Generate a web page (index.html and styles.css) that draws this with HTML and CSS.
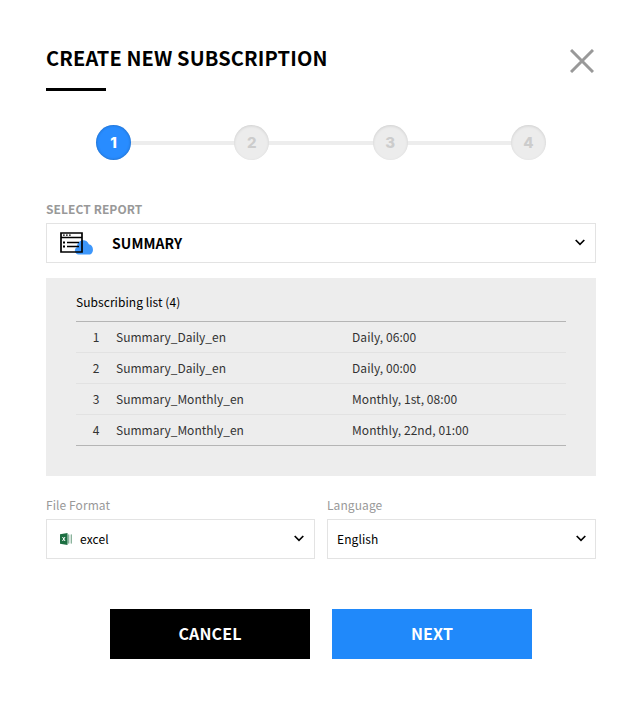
FILE: index.html
```html
<!DOCTYPE html>
<html lang="en">
<head>
<meta charset="utf-8">
<title>Create new subscription</title>
<link rel="stylesheet" href="styles.css">
</head>
<body>
<main class="dialog">
  <header class="header">
    <h1 class="title">CREATE NEW SUBSCRIPTION</h1>
    <button class="close" aria-label="Close"><svg width="24" height="24" viewBox="0 0 24 24"><path d="M1 1L23 23M23 1L1 23" fill="none" stroke="#999" stroke-width="3"/></svg></button>
  </header>
  <ol class="steps">
    <li class="step active">1</li>
    <li class="step">2</li>
    <li class="step">3</li>
    <li class="step">4</li>
  </ol>
  <label class="label strong">SELECT REPORT</label>
  <div class="select">
    <svg class="report-icon" width="34" height="24" viewBox="0 0 34 24"><path d="M18.500 23.500a4 4 0 0 1-1.500-7.500c0-8 10-9 12-2.500 5 0 5.500 10 0 10z" fill="#3d97fb"/><path d="M1 2h21v19H1zM1 6.500h21M7 11.500h12M7 15.500h12" fill="none" stroke="#000" stroke-width="1.700"/><path d="M3 4.200h8" stroke="#000" stroke-width="1.300" stroke-dasharray="1.700 1.300"/><path d="M3 11.500h2M3 15.500h2" stroke="#000" stroke-width="2"/></svg>
    <span class="value report">SUMMARY</span>
    <svg class="chevron" width="10" height="7" viewBox="0 0 10 7"><path d="M.7 1L5 5.300L9.300 1" fill="none" stroke="#000" stroke-width="1.700"/></svg>
  </div>
  <section class="panel">
    <h2 class="panel-title">Subscribing list (4)</h2>
    <div class="list">
      <div class="row"><span class="num">1</span><span>Summary_Daily_en</span><span class="schedule">Daily, 06:00</span></div>
      <div class="row"><span class="num">2</span><span>Summary_Daily_en</span><span class="schedule">Daily, 00:00</span></div>
      <div class="row"><span class="num">3</span><span>Summary_Monthly_en</span><span class="schedule">Monthly, 1st, 08:00</span></div>
      <div class="row"><span class="num">4</span><span>Summary_Monthly_en</span><span class="schedule">Monthly, 22nd, 01:00</span></div>
    </div>
  </section>
  <div class="fields">
    <div class="field">
      <label class="label">File Format</label>
      <div class="select">
        <svg class="excel-icon" width="13" height="12" viewBox="0 0 13 12"><path d="M7 1.500h5v9H7" fill="#d5e5dc"/><path d="M8.500 1.500v9M11.500 1.500v9" stroke="#8bb39c"/><path d="M0 1.200L7.500 0v12L0 10.800z" fill="#1d6f42"/><path d="M2.500 4l2.500 4M5 4L2.500 8" stroke="#fff"/></svg>
        <span class="value">excel</span>
        <svg class="chevron" width="10" height="7" viewBox="0 0 10 7"><path d="M.7 1L5 5.300L9.300 1" fill="none" stroke="#000" stroke-width="1.700"/></svg>
      </div>
    </div>
    <div class="field">
      <label class="label">Language</label>
      <div class="select language">
        <span class="value">English</span>
        <svg class="chevron" width="10" height="7" viewBox="0 0 10 7"><path d="M.7 1L5 5.300L9.300 1" fill="none" stroke="#000" stroke-width="1.700"/></svg>
      </div>
    </div>
  </div>
  <footer class="actions">
    <button class="button">CANCEL</button>
    <button class="button primary">NEXT</button>
  </footer>
</main>
</body>
</html>
```
FILE: styles.css
```css
* { box-sizing: border-box; }
body {
  margin: 0;
  background: #fff;
  color: #000;
  font: 400 12px/20px "Noto Sans CJK KR", sans-serif;
}
button { font: inherit; border: 0; padding: 0; }
.dialog { width: 550px; margin: 0 0 0 46px; padding-top: 43px; }
.header { display: flex; justify-content: space-between; height: 48px; }
.title {
  margin: 0;
  font-size: 20px;
  font-weight: 700;
  line-height: 30px;
  letter-spacing: .12px;
}
.title::after { content: ""; display: block; width: 60px; height: 3px; margin-top: 15px; background: #000; }
.close { display: flex; height: 24px; margin: 6px 2px 0 0; background: none; }
.steps {
  display: flex;
  justify-content: space-between;
  width: 450px;
  height: 35px;
  margin: 34px 0 0 50px;
  padding: 0;
  list-style: none;
  background: linear-gradient(#ededed, #ededed) 0 16px / 100% 4px no-repeat;
}
.step {
  width: 35px;
  height: 35px;
  border-radius: 50%;
  background: #ececec;
  color: #ccc;
  font: 800 15px/35px Inter, sans-serif;
  text-align: center;
  box-shadow: inset 0 1px 3px rgba(0, 0, 0, .12);
}
.step.active { background: #288cff; color: #fff; box-shadow: inset 0 0 3px rgba(0, 0, 0, .3); }
.label { display: block; height: 20px; color: #999; }
.label.strong { margin-top: 39px; font-weight: 700; letter-spacing: .08px; }
.select {
  display: flex;
  align-items: center;
  height: 40px;
  margin-top: 4px;
  padding: 0 10px 0 9px;
  border: 1px solid #e3e3e3;
}
.value { letter-spacing: .1px; }
.report-icon { margin-left: 4px; }
.value.report { margin-left: 18px; font-size: 14px; font-weight: 700; }
.chevron { margin: 0 0 1px auto; }
.language { padding-right: 9px; }
.excel-icon { margin: 0 7px 0 4px; }
.panel { height: 198px; margin-top: 15px; padding: 14px 30px 0; background: #ededed; }
.panel-title { height: 29px; margin: 0; font-size: 12px; font-weight: 400; letter-spacing: .06px; }
.list { border-top: 1px solid #b5b5b5; border-bottom: 1px solid #b5b5b5; }
.row {
  display: grid;
  grid-template-columns: 40px 236px 1fr;
  height: 31px;
  line-height: 30px;
  color: #333;
}
.row:first-child { height: 30px; }
.row + .row { border-top: 1px solid #e2e2e2; }
.num { text-align: center; }
.schedule { letter-spacing: .06px; }
.fields { display: grid; grid-template-columns: 269px 269px; gap: 12px; margin-top: 20px; }
.fields .label { height: 19px; line-height: 18px; letter-spacing: .08px; }
.actions { display: flex; justify-content: center; gap: 22px; margin-top: 50px; }
.button {
  width: 200px;
  height: 50px;
  padding-bottom: 2px;
  background: #000;
  color: #fff;
  font-size: 16px;
  font-weight: 700;
  letter-spacing: .15px;
}
.button.primary { background: #2089fa; }
```
